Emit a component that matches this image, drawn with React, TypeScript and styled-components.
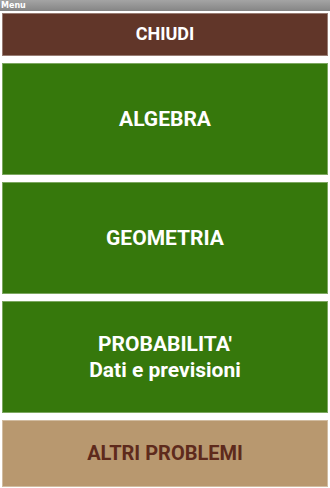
import React from 'react';
import styled, { createGlobalStyle } from 'styled-components';

const colors = {
  brown: '#613629',
  green: '#36780c',
  tan: '#b8986f',
  darkText: '#5e2a1c',
  white: '#ffffff',
};

const GlobalStyle = createGlobalStyle`
  html, body {
    margin: 0;
    padding: 0;
    background: #ffffff;
    font-family: Roboto, "Liberation Sans", sans-serif;
  }
`;

const Screen = styled.div`
  width: 330px;
  height: 488px;
  display: flex;
  flex-direction: column;
  overflow: hidden;
  background: #ffffff;
`;

const TitleBar = styled.div`
  height: 11px;
  flex: none;
  background: linear-gradient(#a4a4a4, #858585);
  color: #ffffff;
  font-family: "DejaVu Sans", sans-serif;
  font-size: 8px;
  font-weight: bold;
  line-height: 11px;
  padding-left: 1px;
`;

const MenuList = styled.div`
  flex: 1;
  display: flex;
  flex-direction: column;
  gap: 7px;
  padding: 2px 2px 0 2px;
`;

type ButtonProps = {
  $bg: string;
  $fg: string;
  $h: number;
  $size: number;
};

const MenuButton = styled.button<ButtonProps>`
  height: ${(p) => p.$h}px;
  flex: none;
  width: 100%;
  border: 1px solid rgba(255, 255, 255, 0.35);
  background: ${(p) => p.$bg};
  color: ${(p) => p.$fg};
  font-family: Roboto, "Liberation Sans", sans-serif;
  font-weight: bold;
  font-size: ${(p) => p.$size}px;
  line-height: 1.24;
  display: flex;
  flex-direction: column;
  align-items: center;
  justify-content: center;
  padding: 0;
  cursor: pointer;
`;

const items = [
  { label: ['CHIUDI'], bg: colors.brown, fg: colors.white, h: 43, size: 18 },
  { label: ['ALGEBRA'], bg: colors.green, fg: colors.white, h: 112, size: 21 },
  { label: ['GEOMETRIA'], bg: colors.green, fg: colors.white, h: 112, size: 21 },
  {
    label: ["PROBABILITA'", 'Dati e previsioni'],
    bg: colors.green,
    fg: colors.white,
    h: 112,
    size: 21,
  },
  { label: ['ALTRI PROBLEMI'], bg: colors.tan, fg: colors.darkText, h: 67, size: 20 },
];

export default function App() {
  return (
    <>
      <GlobalStyle />
      <Screen>
        <TitleBar>Menu</TitleBar>
        <MenuList>
          {items.map((it) => (
            <MenuButton key={it.label[0]} $bg={it.bg} $fg={it.fg} $h={it.h} $size={it.size}>
              {it.label.map((l) => (
                <span key={l}>{l}</span>
              ))}
            </MenuButton>
          ))}
        </MenuList>
      </Screen>
    </>
  );
}
